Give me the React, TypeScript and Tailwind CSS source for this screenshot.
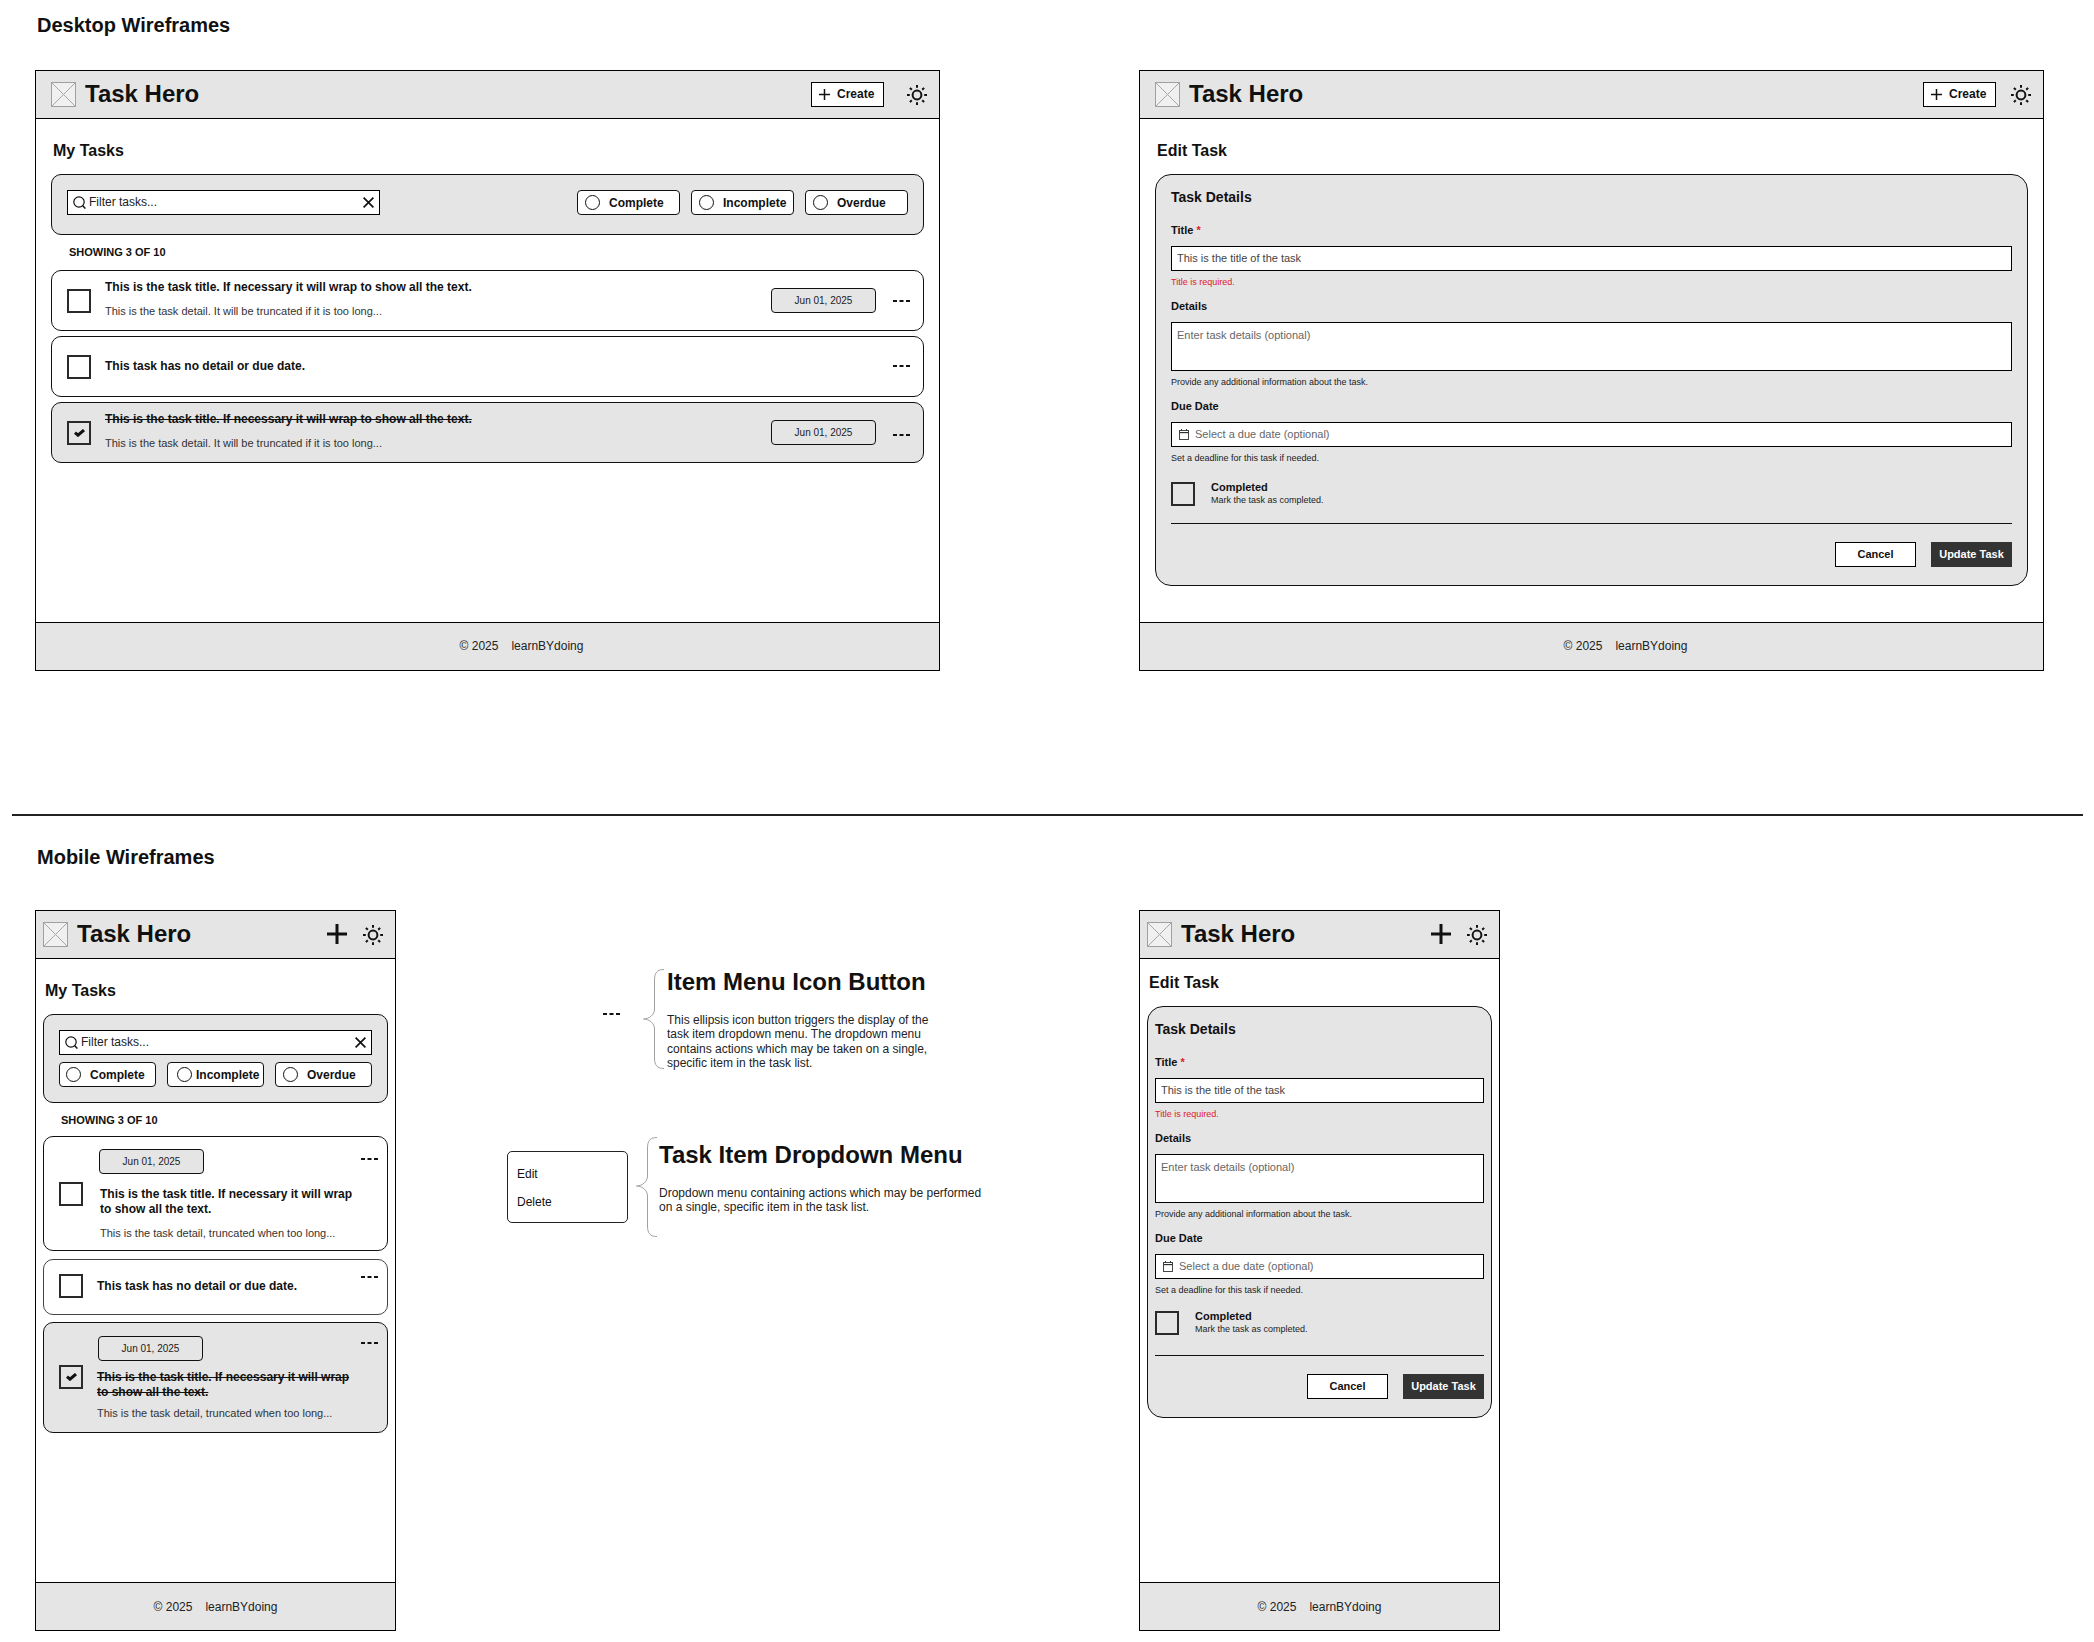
import React from "react";

const Logo = () => (
  <svg width="25" height="25" viewBox="0 0 25 25" className="shrink-0">
    <rect x="0.5" y="0.5" width="24" height="24" fill="#f0f0f0" stroke="#a0a0a0" />
    <path d="M0.5 0.5L24.5 24.5M24.5 0.5L0.5 24.5" stroke="#a8a8a8" strokeWidth="1" fill="none" />
  </svg>
);

const Sun = () => (
  <svg width="22" height="22" viewBox="0 0 22 22" className="shrink-0">
    <circle cx="11" cy="11" r="4.4" fill="none" stroke="#111" strokeWidth="2" />
    <path
      d="M11 1V3.8M11 18.2V21M1 11H3.8M18.2 11H21M3.9 3.9L5.8 5.8M16.2 16.2L18.1 18.1M18.1 3.9L16.2 5.8M5.8 16.2L3.9 18.1"
      stroke="#111"
      strokeWidth="2"
      fill="none"
    />
  </svg>
);

const PlusIcon = ({ size, weight }: { size: number; weight: number }) => (
  <svg width={size} height={size} viewBox={`0 0 ${size} ${size}`} className="shrink-0">
    <path d={`M${size / 2} 0V${size}M0 ${size / 2}H${size}`} stroke="#111" strokeWidth={weight} fill="none" />
  </svg>
);

const Dots = () => (
  <svg width="17" height="2" viewBox="0 0 17 2" className="block shrink-0">
    <path d="M0 1H4M6.5 1H10.5M13 1H17" stroke="#111" strokeWidth="2" fill="none" />
  </svg>
);

const SearchIcon = () => (
  <svg width="13" height="13" viewBox="0 0 13 13" className="shrink-0">
    <circle cx="6" cy="6" r="5.2" fill="none" stroke="#111" strokeWidth="1.2" />
    <path d="M9.7 9.7L12.4 12.6" stroke="#111" strokeWidth="1.4" fill="none" />
  </svg>
);

const CloseIcon = () => (
  <svg width="11" height="11" viewBox="0 0 11 11" className="shrink-0">
    <path d="M0.6 0.6L10.4 10.4M10.4 0.6L0.6 10.4" stroke="#111" strokeWidth="1.7" fill="none" />
  </svg>
);

const CalendarIcon = () => (
  <svg width="10" height="11" viewBox="0 0 10 11" className="shrink-0">
    <rect x="0.5" y="1.5" width="9" height="9" fill="none" stroke="#333" strokeWidth="0.9" />
    <path d="M0.5 3.6H9.5" stroke="#333" strokeWidth="1.2" fill="none" />
    <path d="M2.5 0V2M7.5 0V2" stroke="#333" strokeWidth="0.9" fill="none" />
  </svg>
);

const Brace = ({ h, tip }: { h: number; tip: number }) => (
  <svg width="22" height={h} viewBox={`0 0 22 ${h}`} className="shrink-0">
    <path
      d={`M21 0.5C14 0.5 11.5 4 11.5 11V${tip - 10}C11.5 ${tip - 4} 6 ${tip} 0.5 ${tip}C6 ${tip} 11.5 ${tip + 4} 11.5 ${tip + 10}V${h - 11}C11.5 ${h - 4} 14 ${h - 0.5} 21 ${h - 0.5}`}
      fill="none"
      stroke="#a0a0a0"
      strokeWidth="1"
    />
  </svg>
);

const Checkbox = ({ checked = false, cls = "" }: { checked?: boolean; cls?: string }) => (
  <div className={`flex h-[24px] w-[24px] shrink-0 items-center justify-center border-2 border-[#2a2a2a] ${cls}`}>
    {checked && (
      <svg width="11" height="8" viewBox="0 0 11 8">
        <path d="M1 3.6L4 6.2L10 1" stroke="#111" strokeWidth="3" fill="none" />
      </svg>
    )}
  </div>
);

const Header = ({ children, mobile = false }: { children: React.ReactNode; mobile?: boolean }) => (
  <div className={`flex h-[48px] shrink-0 items-center border-b border-black bg-[#e5e5e5] pr-[11px] ${mobile ? "pl-[7px]" : "pl-[15px]"}`}>
    <Logo />
    <div className="ml-[9px] pb-[1px] text-[24px] leading-[28px] font-bold text-[#111]">Task Hero</div>
    <div className="ml-auto flex items-center">{children}</div>
  </div>
);

const CreateButton = ({ gap }: { gap: string }) => (
  <div className={`flex h-[25px] w-[73px] items-center border border-black bg-white pb-[1px] pl-[7px] ${gap}`}>
    <PlusIcon size={11} weight={1.5} />
    <span className="ml-[7px] text-[12px] leading-[14px] font-bold text-[#111]">Create</span>
  </div>
);

const MobilePlus = () => (
  <div className="mr-[15px] mb-[1px]">
    <PlusIcon size={20} weight={3} />
  </div>
);

const Footer = ({ mobile = false }: { mobile?: boolean }) => (
  <div className={`flex h-[48px] shrink-0 items-center justify-center gap-[13px] border-t border-black bg-[#e5e5e5] text-[12px] leading-[14px] text-[#222] ${mobile ? "" : "pb-[2px] pl-[68px]"}`}>
    <span>© 2025</span>
    <span>learnBYdoing</span>
  </div>
);

const Frame = ({ cls, children }: { cls: string; children: React.ReactNode }) => (
  <div className={`flex shrink-0 flex-col border border-black bg-white ${cls}`}>{children}</div>
);

const Chip = ({ label, w, pl, gap }: { label: string; w: string; pl: string; gap: string }) => (
  <div className={`flex h-[25px] items-center rounded-[4px] border border-[#111] bg-white ${w} ${pl}`}>
    <span className={`block h-[15px] w-[15px] shrink-0 rounded-full border border-[#111] ${gap}`} />
    <span className="text-[12px] leading-[14px] font-bold whitespace-nowrap text-[#111]">{label}</span>
  </div>
);

const FilterInput = () => (
  <div className="flex h-[25px] w-[313px] shrink-0 items-center border border-black bg-white px-[5px]">
    <SearchIcon />
    <span className="ml-[3px] pb-[2px] text-[12px] leading-[14px] text-[#222]">Filter tasks...</span>
    <span className="ml-auto">
      <CloseIcon />
    </span>
  </div>
);

const Heading = ({ children, cls }: { children: React.ReactNode; cls: string }) => (
  <div className={`ml-[2px] text-[16px] leading-[24px] font-bold text-[#111] ${cls}`}>{children}</div>
);

const Showing = () => (
  <div className="ml-[18px] text-[11px] leading-[16px] font-bold text-[#111]">SHOWING 3 OF 10</div>
);

const DateChip = ({ done = false, cls = "" }: { done?: boolean; cls?: string }) => (
  <div className={`flex h-[25px] w-[105px] shrink-0 items-center justify-center rounded-[4px] border border-[#111] text-[10px] leading-[12px] text-[#222] ${done ? "" : "bg-[#e5e5e5]"} ${cls}`}>
    Jun 01, 2025
  </div>
);

const DesktopRow = ({ title, detail = false, done = false, dotsCls = "" }: { title: string; detail?: boolean; done?: boolean; dotsCls?: string }) => (
  <div className={`flex h-[61px] items-center rounded-[10px] border border-[#111] pl-[15px] ${done ? "bg-[#e5e5e5]" : "bg-white"}`}>
    <Checkbox checked={done} />
    <div className={`ml-[14px] flex h-full flex-col justify-center ${detail ? "pb-[3px]" : "pb-[1px]"}`}>
      <div className={`text-[12px] leading-[14px] font-bold text-[#111] ${done ? "line-through" : ""}`}>{title}</div>
      {detail && <div className="mt-[10px] text-[11px] leading-[14px] text-[#333]">This is the task detail. It will be truncated if it is too long...</div>}
    </div>
    <div className="mr-[13px] ml-auto flex items-center">
      {detail && <DateChip done={done} />}
      <div className={`ml-[17px] ${dotsCls}`}>
        <Dots />
      </div>
    </div>
  </div>
);

const Field = ({ cls, children }: { cls: string; children: React.ReactNode }) => <div className={cls}>{children}</div>;

const Label = ({ children, cls }: { children: React.ReactNode; cls: string }) => (
  <div className={`text-[11px] leading-[14px] font-bold text-[#111] ${cls}`}>{children}</div>
);

const Help = ({ children, red = false }: { children: React.ReactNode; red?: boolean }) => (
  <div className={`mt-[5px] text-[9px] leading-[12px] ${red ? "text-[#e0172c]" : "text-[#222]"}`}>{children}</div>
);

const EditForm = ({ cls, checkCls, ruleCls }: { cls: string; checkCls: string; ruleCls: string }) => (
  <div className={`flex flex-col rounded-[16px] border border-[#111] bg-[#e5e5e5] pt-[12px] pb-[18px] ${cls}`}>
    <div className="text-[14px] leading-[20px] font-bold text-[#111]">Task Details</div>
    <Label cls="mt-[16px]">
      Title <span className="text-[#e0172c]">*</span>
    </Label>
    <Field cls="mt-[9px] flex h-[25px] items-center border border-black bg-white pb-[1px] pl-[5px] text-[11px] leading-[14px] text-[#444]">This is the title of the task</Field>
    <Help red>Title is required.</Help>
    <Label cls="mt-[11px]">Details</Label>
    <Field cls="mt-[9px] h-[49px] border border-black bg-white pt-[5px] pl-[5px] text-[11px] leading-[14px] text-[#666]">Enter task details (optional)</Field>
    <Help>Provide any additional information about the task.</Help>
    <Label cls="mt-[11px]">Due Date</Label>
    <Field cls="mt-[9px] flex h-[25px] items-center border border-black bg-white pl-[7px] text-[11px] leading-[14px] text-[#666]">
      <CalendarIcon />
      <span className="ml-[6px] pb-[1px]">Select a due date (optional)</span>
    </Field>
    <Help>Set a deadline for this task if needed.</Help>
    <div className={`flex h-[24px] items-start ${checkCls}`}>
      <Checkbox />
      <div className="-mt-[1px] ml-[16px]">
        <div className="text-[11px] leading-[13px] font-bold text-[#111]">Completed</div>
        <div className="text-[9px] leading-[12px] text-[#222]">Mark the task as completed.</div>
      </div>
    </div>
    <div className={`h-px bg-[#111] ${ruleCls}`} />
    <div className="mt-[18px] flex justify-end gap-[15px]">
      <div className="flex h-[25px] w-[81px] items-center justify-center border border-black bg-white pb-[1px] text-[11px] leading-[14px] font-bold text-[#111]">Cancel</div>
      <div className="flex h-[25px] w-[81px] items-center justify-center bg-[#333333] pb-[1px] text-[11px] leading-[14px] font-bold text-white">Update Task</div>
    </div>
  </div>
);

const TITLE = "This is the task title. If necessary it will wrap to show all the text.";
const MOBILE_DETAIL = "This is the task detail, truncated when too long...";

const Annotation = () => (
  <div className="w-[743px] shrink-0 pt-[58px]">
    <div className="flex h-[101px]">
      <div className="mt-[45px] ml-[207px]">
        <Dots />
      </div>
      <div className="mt-[1px] ml-[23px]">
        <Brace h={100} tip={50} />
      </div>
      <div className="ml-[2px]">
        <div className="text-[24px] leading-[28px] font-bold text-[#111]">Item Menu Icon Button</div>
        <div className="mt-[17px] text-[12px] leading-[14.4px] text-[#222]">
          This ellipsis icon button triggers the display of the
          <br />
          task item dropdown menu. The dropdown menu
          <br />
          contains actions which may be taken on a single,
          <br />
          specific item in the task list.
        </div>
      </div>
    </div>
    <div className="mt-[68px] flex h-[101px]">
      <div className="mt-[14px] ml-[111px] flex h-[72px] w-[121px] shrink-0 flex-col rounded-[5px] border border-[#222] bg-white pt-[15px] pl-[9px] text-[12px] leading-[14px] text-[#111]">
        <span>Edit</span>
        <span className="mt-[14px]">Delete</span>
      </div>
      <div className="ml-[8px]">
        <Brace h={100} tip={49} />
      </div>
      <div className="ml-[1px]">
        <div className="mt-[4px] text-[24px] leading-[28px] font-bold text-[#111]">Task Item Dropdown Menu</div>
        <div className="mt-[17px] text-[12px] leading-[14.4px] text-[#222]">
          Dropdown menu containing actions which may be performed
          <br />
          on a single, specific item in the task list.
        </div>
      </div>
    </div>
  </div>
);

export default function App() {
  return (
    <div className="h-[1642px] w-[2094px] overflow-hidden bg-white font-['Liberation_Sans',Arial,sans-serif]">
      <h2 className="pt-[13px] pl-[37px] text-[20px] leading-[24px] font-bold text-[#111]">Desktop Wireframes</h2>
      <div className="mt-[33px] flex gap-[199px] pl-[35px]">
        <Frame cls="h-[601px] w-[905px]">
          <Header>
            <CreateButton gap="mr-[22px]" />
            <Sun />
          </Header>
          <div className="flex-1 px-[15px]">
            <Heading cls="mt-[20px] mb-[11px]">My Tasks</Heading>
            <div className="flex h-[61px] items-start rounded-[10px] border border-[#111] bg-[#e5e5e5] px-[15px] pt-[15px]">
              <FilterInput />
              <div className="ml-auto flex gap-[11px]">
                <Chip label="Complete" w="w-[103px]" pl="pl-[7px]" gap="mr-[9px]" />
                <Chip label="Incomplete" w="w-[103px]" pl="pl-[7px]" gap="mr-[9px]" />
                <Chip label="Overdue" w="w-[103px]" pl="pl-[7px]" gap="mr-[9px]" />
              </div>
            </div>
            <div className="mt-[9px] mb-[10px]">
              <Showing />
            </div>
            <div className="flex flex-col gap-[5px]">
              <DesktopRow title={TITLE} detail />
              <DesktopRow title="This task has no detail or due date." dotsCls="-mt-[2px]" />
              <DesktopRow title={TITLE} detail done dotsCls="mt-[5px]" />
            </div>
          </div>
          <Footer />
        </Frame>
        <Frame cls="h-[601px] w-[905px]">
          <Header>
            <CreateButton gap="mr-[14px]" />
            <Sun />
          </Header>
          <div className="flex-1 px-[15px]">
            <Heading cls="mt-[20px] mb-[11px]">Edit Task</Heading>
            <EditForm cls="px-[15px]" checkCls="mt-[18px]" ruleCls="mt-[17px]" />
          </div>
          <Footer />
        </Frame>
      </div>

      <div className="mt-[143px] mr-[11px] ml-[12px] h-[2px] bg-[#222]" />

      <h2 className="mt-[29px] pl-[37px] text-[20px] leading-[24px] font-bold text-[#111]">Mobile Wireframes</h2>
      <div className="mt-[41px] flex pl-[35px]">
        <Frame cls="h-[721px] w-[361px]">
          <Header mobile>
            <MobilePlus />
            <Sun />
          </Header>
          <div className="flex-1 pl-[7px]">
            <Heading cls="mt-[20px] mb-[11px]">My Tasks</Heading>
            <div className="flex h-[89px] w-[345px] flex-col rounded-[10px] border border-[#111] bg-[#e5e5e5] pt-[15px] pl-[15px]">
              <FilterInput />
              <div className="mt-[7px] flex gap-[11px]">
                <Chip label="Complete" w="w-[97px]" pl="pl-[6px]" gap="mr-[9px]" />
                <Chip label="Incomplete" w="w-[97px]" pl="pl-[9px]" gap="mr-[4px]" />
                <Chip label="Overdue" w="w-[97px]" pl="pl-[7px]" gap="mr-[9px]" />
              </div>
            </div>
            <div className="mt-[9px] mb-[8px]">
              <Showing />
            </div>
            <div className="flex h-[115px] w-[345px] items-center rounded-[10px] border border-[#111] bg-white pl-[15px]">
              <Checkbox />
              <div className="ml-[16px] flex h-full flex-col pt-[12px]">
                <DateChip />
                <div className="mt-[13px] ml-[1px] w-[258px] text-[12px] leading-[15px] font-bold text-[#111]">{TITLE}</div>
                <div className="mt-[9px] ml-[1px] text-[11px] leading-[14px] text-[#333]">{MOBILE_DETAIL}</div>
              </div>
              <div className="mr-[9px] ml-auto h-full pt-[21px]">
                <Dots />
              </div>
            </div>
            <div className="mt-[8px] flex h-[56px] w-[345px] items-center rounded-[10px] border border-[#444] bg-white pl-[15px]">
              <Checkbox cls="mb-[2px]" />
              <div className="ml-[14px] pb-[2px] text-[12px] leading-[14px] font-bold text-[#111]">This task has no detail or due date.</div>
              <div className="mr-[9px] ml-auto h-full pt-[16px]">
                <Dots />
              </div>
            </div>
            <div className="mt-[7px] flex h-[111px] w-[345px] items-center rounded-[10px] border border-[#111] bg-[#e5e5e5] pl-[15px]">
              <Checkbox checked cls="mb-[2px]" />
              <div className="ml-[14px] flex h-full flex-col pt-[13px]">
                <DateChip done cls="ml-[1px]" />
                <div className="mt-[9px] w-[258px] text-[12px] leading-[15px] font-bold text-[#111] line-through">{TITLE}</div>
                <div className="mt-[6px] text-[11px] leading-[14px] text-[#333]">{MOBILE_DETAIL}</div>
              </div>
              <div className="mr-[9px] ml-auto h-full pt-[19px]">
                <Dots />
              </div>
            </div>
          </div>
          <Footer mobile />
        </Frame>
        <Annotation />
        <Frame cls="h-[721px] w-[361px]">
          <Header mobile>
            <MobilePlus />
            <Sun />
          </Header>
          <div className="flex-1 pl-[7px]">
            <Heading cls="mt-[12px] mb-[11px]">Edit Task</Heading>
            <EditForm cls="w-[345px] px-[7px]" checkCls="mt-[15px]" ruleCls="mt-[20px]" />
          </div>
          <Footer mobile />
        </Frame>
      </div>
    </div>
  );
}
